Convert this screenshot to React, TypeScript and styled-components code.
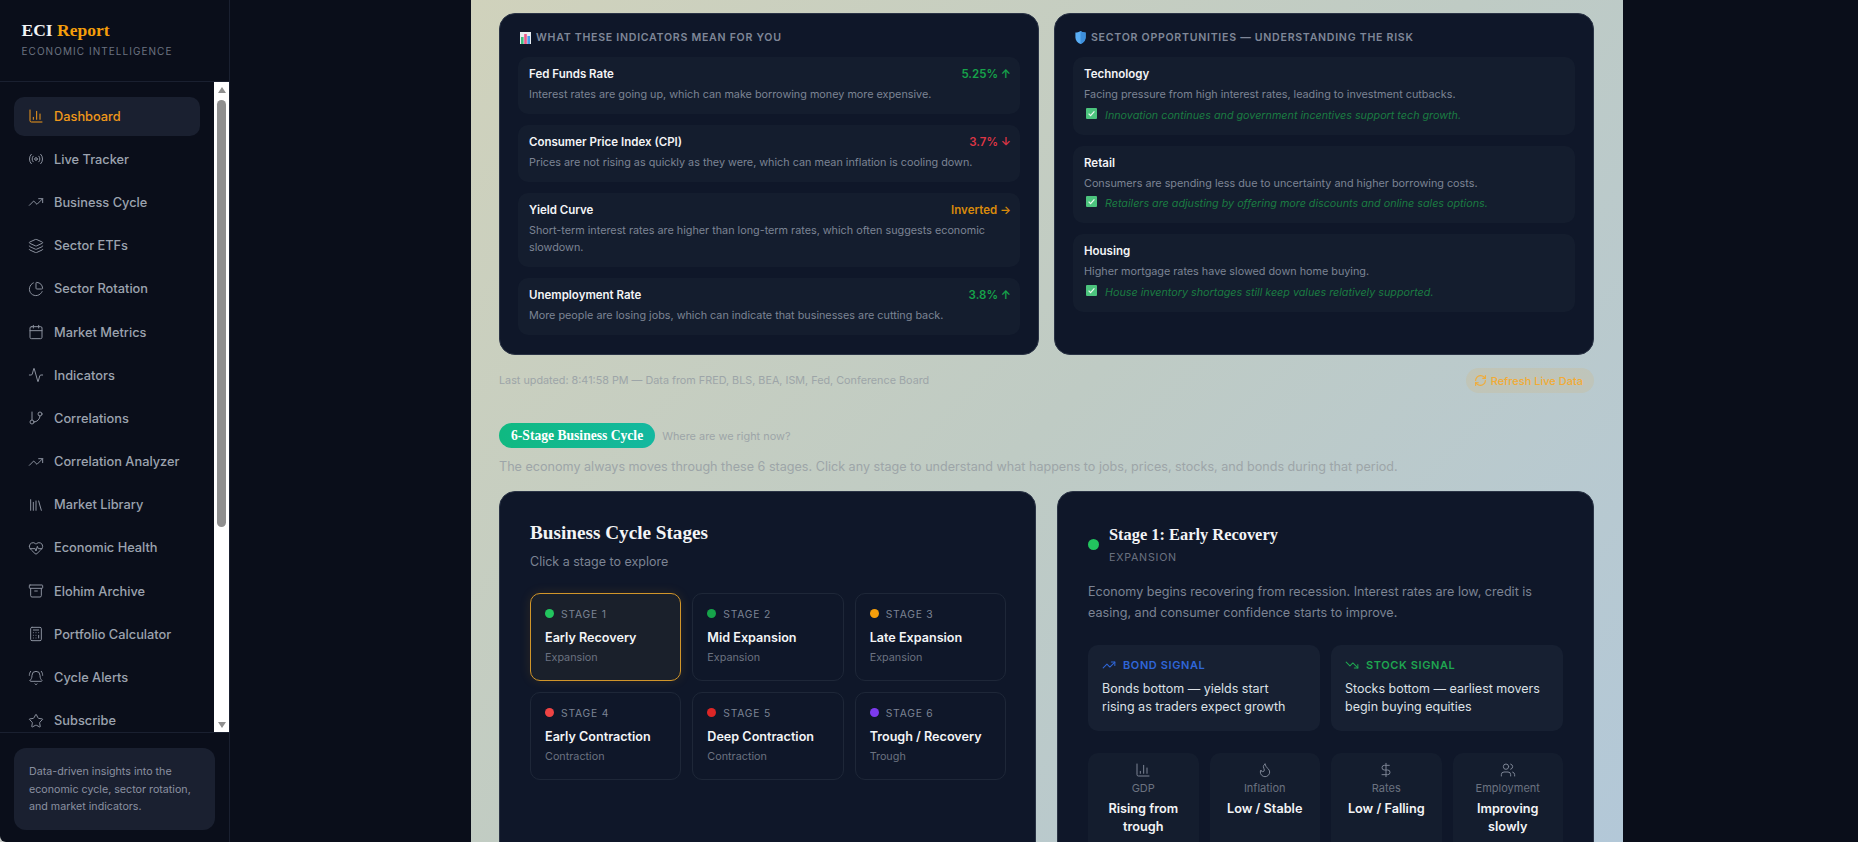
import React from 'react';
import styled, { createGlobalStyle } from 'styled-components';
import {
    Activity,
    Archive,
    BarChart3,
    BellRing,
    Calculator,
    Calendar,
    DollarSign,
    Flame,
    GitBranch,
    HeartPulse,
    Layers,
    Library,
    PieChart,
    Radio,
    RefreshCw,
    Star,
    TrendingDown,
    TrendingUp,
    Users,
} from 'lucide-react';

const SANS = `Inter, "Liberation Sans", sans-serif`;
const SERIF = `"Liberation Serif", "DejaVu Serif", serif`;

const GlobalStyle = createGlobalStyle`
    html, body {
        margin: 0;
        height: 100%;
        overflow: hidden;
        background: #c9ccc9;
    }
    * {
        box-sizing: border-box;
    }
`;

const Shell = styled.div`
    display: flex;
    height: 842px;
    overflow: hidden;
    background: #0a0e1a;
    border-bottom-left-radius: 6px;
    font-family: ${SANS};
`;

// サイドバー
const Sidebar = styled.aside`
    display: flex;
    flex-direction: column;
    flex: none;
    width: 230px;
    height: 100%;
    border-right: 1px solid #1a2030;
`;

const Brand = styled.div`
    flex: none;
    height: 82px;
    padding: 18px 21.5px 0;
    border-bottom: 1px solid #1a2030;
`;

const Logo = styled.div`
    font-family: ${SERIF};
    font-size: 17.5px;
    font-weight: 700;
    line-height: 24px;
    color: #f3f4f6;

    span {
        color: #f59e0b;
    }
`;

const Tagline = styled.div`
    margin-top: 2px;
    font-size: 10px;
    line-height: 14px;
    letter-spacing: 1.05px;
    color: #6b7280;
`;

const NavArea = styled.div`
    display: flex;
    flex: 1;
    min-height: 0;
`;

const NavList = styled.nav`
    display: flex;
    flex-direction: column;
    flex: 1;
    gap: 4px;
    min-width: 0;
    padding: 14.5px 14px 0;
    overflow: hidden;
`;

const NavItem = styled.div<{ $active?: boolean }>`
    display: flex;
    align-items: center;
    flex: none;
    gap: 10px;
    height: 39.2px;
    padding: 0 14px;
    border-radius: 10px;
    font-size: 12.8px;
    font-weight: 500;
    color: ${(p) => (p.$active ? '#f0981a' : '#9ca3af')};
    background: ${(p) => (p.$active ? '#1a2030' : 'transparent')};

    svg {
        flex: none;
        color: ${(p) => (p.$active ? '#f0981a' : '#8b919e')};
    }
`;

const ScrollTrack = styled.div`
    display: flex;
    flex-direction: column;
    align-items: center;
    flex: none;
    width: 15px;
    background: #ffffff;
`;

const ScrollArrow = styled.div<{ $down?: boolean }>`
    flex: none;
    width: 0;
    height: 0;
    margin: ${(p) => (p.$down ? 'auto 0 4px' : '5px 0 0')};
    border-left: 4.5px solid transparent;
    border-right: 4.5px solid transparent;
    border-bottom: ${(p) => (p.$down ? '0' : '6px solid #8f8f8f')};
    border-top: ${(p) => (p.$down ? '6px solid #8f8f8f' : '0')};
`;

const ScrollThumb = styled.div`
    flex: none;
    width: 9px;
    height: 427px;
    margin-top: 7px;
    border-radius: 5px;
    background: #8f8f8f;
`;

const SidebarFoot = styled.div`
    flex: none;
    height: 110px;
    padding: 15px 14px 0;
    border-top: 1px solid #1a2030;
`;

const FootNote = styled.div`
    width: 201px;
    height: 82px;
    padding: 15px;
    border-radius: 12px;
    background: #1a2030;
    font-size: 10.7px;
    line-height: 17.5px;
    color: #8a90a0;
`;

// メインカラム
const Column = styled.main`
    flex: none;
    width: 1152px;
    height: 100%;
    margin-left: 241px;
    padding: 13px 29px 0 28px;
    overflow: hidden;
    background: linear-gradient(135deg, #d0d2bc 0%, #bfcbc4 50%, #b3c8d8 100%);
`;

const CardRow = styled.div`
    display: grid;
    grid-template-columns: 540px 540px;
    gap: 15px;
`;

const Card = styled.section`
    height: 342px;
    padding: 16.5px 18px;
    border: 1px solid #2a3345;
    border-radius: 16px;
    background: #0f1729;
`;

const CardTitle = styled.h3`
    display: flex;
    align-items: center;
    gap: 5px;
    height: 14px;
    margin: 0 0 12.5px 2px;
    font-size: 10.6px;
    font-weight: 600;
    letter-spacing: 0.72px;
    text-transform: uppercase;
    color: #7f8798;
`;

const RowList = styled.div`
    display: flex;
    flex-direction: column;
    gap: 11px;
`;

const InfoRow = styled.div`
    padding: 10px 9px 11.1px 11px;
    border-radius: 10px;
    background: #141d2e;
`;

const InfoHead = styled.div`
    display: flex;
    align-items: center;
    justify-content: space-between;
    height: 14px;
`;

const InfoName = styled.div`
    font-size: 11.5px;
    font-weight: 600;
    line-height: 14px;
    color: #f3f4f6;
`;

const InfoValue = styled.div<{ $color: string }>`
    font-size: 11.5px;
    font-weight: 600;
    color: ${(p) => p.$color};
`;

const InfoText = styled.p`
    margin: 5px 0 0;
    font-size: 10.8px;
    line-height: 17px;
    color: #7c8494;
`;

const InfoNote = styled.div`
    display: flex;
    align-items: center;
    gap: 8px;
    margin-top: 3.5px;
    margin-left: 2px;
    font-size: 10.75px;
    font-style: italic;
    line-height: 17px;
    color: #1b7c42;
`;

const StatusBar = styled.div`
    display: flex;
    align-items: center;
    justify-content: space-between;
    height: 25px;
    margin-top: 13px;
`;

const StatusText = styled.span`
    font-size: 10.8px;
    color: #9da5a8;
`;

const RefreshPill = styled.div`
    display: flex;
    align-items: center;
    gap: 4px;
    height: 25px;
    padding: 0 11px 0 8px;
    border-radius: 12.5px;
    background: rgba(245, 158, 11, 0.1);
    font-size: 11px;
    font-weight: 500;
    color: #f2ab35;
`;

const SectionHead = styled.div`
    display: flex;
    align-items: center;
    gap: 7px;
    margin-top: 30px;
`;

const SectionBadge = styled.div`
    height: 25px;
    padding: 0 12px;
    border-radius: 12.5px;
    background: linear-gradient(90deg, #10b981, #14b8a0);
    font-family: ${SERIF};
    font-size: 13.6px;
    font-weight: 700;
    line-height: 25px;
    color: #ffffff;
`;

const SectionHint = styled.span`
    font-size: 10.9px;
    color: #9da5a8;
`;

const SectionText = styled.p`
    margin: 9px 0 0;
    font-size: 12.6px;
    line-height: 20px;
    color: #9da5a8;
`;

const StageLayout = styled.div`
    display: grid;
    grid-template-columns: 537px 537px;
    gap: 21px;
    margin-top: 14px;
`;

const StagePanel = styled.section`
    height: 500px;
    padding: 30px;
    border: 1px solid #2a3345;
    border-radius: 16px;
    background: #0f1729;
`;

const PanelTitle = styled.h2`
    margin: -2px 0 0;
    font-family: ${SERIF};
    font-size: 19.2px;
    font-weight: 700;
    line-height: 26px;
    color: #f3f4f6;
`;

const PanelSub = styled.p`
    margin: 6px 0 0;
    font-size: 12.5px;
    line-height: 20px;
    color: #7c8494;
`;

const StageGrid = styled.div`
    display: grid;
    grid-template-columns: repeat(3, 1fr);
    gap: 11px;
    width: 476px;
    margin-top: 20.5px;
`;

const StageCard = styled.div<{ $active?: boolean }>`
    height: 88px;
    padding: 13px 14px;
    border: 1px solid ${(p) => (p.$active ? '#d1962a' : '#1e2738')};
    border-radius: 10px;
    background: ${(p) => (p.$active ? '#1a202b' : 'transparent')};
    box-shadow: ${(p) => (p.$active ? '0 0 12px rgba(245, 158, 11, 0.12)' : 'none')};
`;

const StageLabel = styled.div`
    display: flex;
    align-items: center;
    gap: 7px;
    height: 14px;
    font-size: 10.3px;
    letter-spacing: 0.8px;
    color: #7c8494;
`;

const Dot = styled.span<{ $color: string; $size?: number }>`
    flex: none;
    width: ${(p) => p.$size ?? 9}px;
    height: ${(p) => p.$size ?? 9}px;
    border-radius: 50%;
    background: ${(p) => p.$color};
`;

const StageName = styled.div`
    margin-top: 7.5px;
    font-size: 12.6px;
    font-weight: 600;
    line-height: 20px;
    color: #f3f4f6;
`;

const StageType = styled.div`
    margin-top: 3px;
    font-size: 10.8px;
    line-height: 14px;
    color: #6b7280;
`;

const DetailHead = styled.div`
    display: flex;
    align-items: center;
    gap: 10px;
`;

const DetailTitle = styled.h2`
    margin: 0;
    font-family: ${SERIF};
    font-size: 16.4px;
    font-weight: 700;
    line-height: 26px;
    color: #f3f4f6;
`;

const DetailPhase = styled.div`
    margin-top: 2px;
    font-size: 10.7px;
    letter-spacing: 0.75px;
    line-height: 16px;
    color: #6b7280;
`;

const DetailText = styled.p`
    margin: 15px 0 0;
    font-size: 12.6px;
    line-height: 21.2px;
    color: #7c8494;
`;

const SignalGrid = styled.div`
    display: grid;
    grid-template-columns: 1fr 1fr;
    gap: 11px;
    margin-top: 22px;
`;

const SignalBox = styled.div`
    height: 86px;
    padding: 13px 14px;
    border-radius: 10px;
    background: #172032;
`;

const SignalHead = styled.div<{ $color: string }>`
    display: flex;
    align-items: center;
    gap: 7px;
    height: 14px;
    font-size: 11px;
    font-weight: 600;
    letter-spacing: 0.6px;
    color: ${(p) => p.$color};
`;

const SignalText = styled.div`
    margin-top: 8px;
    font-size: 12.5px;
    line-height: 18px;
    color: #dde1e6;
`;

const MetricGrid = styled.div`
    display: grid;
    grid-template-columns: repeat(4, 1fr);
    gap: 11px;
    margin-top: 22px;
`;

const MetricBox = styled.div`
    height: 110px;
    padding: 9px 8px;
    border-radius: 10px;
    background: #141d2e;
    text-align: center;

    svg {
        display: block;
        margin: 0 auto;
        color: #7c8494;
    }
`;

const MetricLabel = styled.div`
    margin-top: 2px;
    font-size: 11px;
    line-height: 16px;
    color: #6b7280;
`;

const MetricValue = styled.div`
    margin-top: 4px;
    font-size: 12.7px;
    font-weight: 600;
    line-height: 18px;
    color: #f3f4f6;
`;

const ChartEmoji = () => (
    <svg width="11" height="12" viewBox="0 0 11 12">
        <rect width="11" height="12" fill="#e8eef2" />
        <rect x="1" y="5" width="2.6" height="7" fill="#3fbf7f" />
        <rect x="4.2" y="2" width="2.6" height="10" fill="#ef5a8a" />
        <rect x="7.4" y="4" width="2.6" height="8" fill="#4a9be8" />
    </svg>
);

const ShieldEmoji = () => (
    <svg width="11" height="13" viewBox="0 0 11 13">
        <path d="M5.5 0C3.8 1 2 1.5 0.4 1.6V6.5C0.4 9.5 2.6 11.8 5.5 13C8.4 11.8 10.6 9.5 10.6 6.5V1.6C9 1.5 7.2 1 5.5 0Z" fill="#5aaef5" />
        <path d="M5.5 0V13C8.4 11.8 10.6 9.5 10.6 6.5V1.6C9 1.5 7.2 1 5.5 0Z" fill="#3d8fdc" />
    </svg>
);

const CheckEmoji = () => (
    <svg width="11" height="11" viewBox="0 0 11 11" style={{ marginTop: -4, flex: 'none' }}>
        <rect width="11" height="11" rx="1" fill="#4cc47e" />
        <path d="M2.6 5.6L4.6 7.6L8.4 3.4" fill="none" stroke="#e8f8ee" strokeWidth="1.3" />
    </svg>
);

const NAV_ITEMS = [
    { label: 'Dashboard', icon: BarChart3, active: true },
    { label: 'Live Tracker', icon: Radio },
    { label: 'Business Cycle', icon: TrendingUp },
    { label: 'Sector ETFs', icon: Layers },
    { label: 'Sector Rotation', icon: PieChart },
    { label: 'Market Metrics', icon: Calendar },
    { label: 'Indicators', icon: Activity },
    { label: 'Correlations', icon: GitBranch },
    { label: 'Correlation Analyzer', icon: TrendingUp },
    { label: 'Market Library', icon: Library },
    { label: 'Economic Health', icon: HeartPulse },
    { label: 'Elohim Archive', icon: Archive },
    { label: 'Portfolio Calculator', icon: Calculator },
    { label: 'Cycle Alerts', icon: BellRing },
    { label: 'Subscribe', icon: Star },
];

const INDICATORS = [
    {
        name: 'Fed Funds Rate',
        value: '5.25% ↑',
        color: '#16a34a',
        text: 'Interest rates are going up, which can make borrowing money more expensive.',
    },
    {
        name: 'Consumer Price Index (CPI)',
        value: '3.7% ↓',
        color: '#dc3545',
        text: 'Prices are not rising as quickly as they were, which can mean inflation is cooling down.',
    },
    {
        name: 'Yield Curve',
        value: 'Inverted →',
        color: '#d98a0b',
        text: 'Short-term interest rates are higher than long-term rates, which often suggests economic slowdown.',
    },
    {
        name: 'Unemployment Rate',
        value: '3.8% ↑',
        color: '#16a34a',
        text: 'More people are losing jobs, which can indicate that businesses are cutting back.',
    },
];

const SECTORS = [
    {
        name: 'Technology',
        text: 'Facing pressure from high interest rates, leading to investment cutbacks.',
        note: 'Innovation continues and government incentives support tech growth.',
    },
    {
        name: 'Retail',
        text: 'Consumers are spending less due to uncertainty and higher borrowing costs.',
        note: 'Retailers are adjusting by offering more discounts and online sales options.',
    },
    {
        name: 'Housing',
        text: 'Higher mortgage rates have slowed down home buying.',
        note: 'House inventory shortages still keep values relatively supported.',
    },
];

const STAGES = [
    { label: 'STAGE 1', name: 'Early Recovery', type: 'Expansion', color: '#22c55e', active: true },
    { label: 'STAGE 2', name: 'Mid Expansion', type: 'Expansion', color: '#16a34a' },
    { label: 'STAGE 3', name: 'Late Expansion', type: 'Expansion', color: '#f59e0b' },
    { label: 'STAGE 4', name: 'Early Contraction', type: 'Contraction', color: '#ef4444' },
    { label: 'STAGE 5', name: 'Deep Contraction', type: 'Contraction', color: '#dc2626' },
    { label: 'STAGE 6', name: 'Trough / Recovery', type: 'Trough', color: '#7c3aed' },
];

const METRICS = [
    { label: 'GDP', value: 'Rising from trough', icon: BarChart3 },
    { label: 'Inflation', value: 'Low / Stable', icon: Flame },
    { label: 'Rates', value: 'Low / Falling', icon: DollarSign },
    { label: 'Employment', value: 'Improving slowly', icon: Users },
];

const App: React.FC = () => {
    return (
        <>
            <GlobalStyle />
            <Shell>
                <Sidebar>
                    <Brand>
                        <Logo>
                            ECI <span>Report</span>
                        </Logo>
                        <Tagline>ECONOMIC INTELLIGENCE</Tagline>
                    </Brand>
                    <NavArea>
                        <NavList>
                            {NAV_ITEMS.map((item) => (
                                <NavItem key={item.label} $active={item.active}>
                                    <item.icon size={16} strokeWidth={1.5} />
                                    {item.label}
                                </NavItem>
                            ))}
                        </NavList>
                        <ScrollTrack>
                            <ScrollArrow />
                            <ScrollThumb />
                            <ScrollArrow $down />
                        </ScrollTrack>
                    </NavArea>
                    <SidebarFoot>
                        <FootNote>
                            Data-driven insights into the economic cycle, sector rotation, and market indicators.
                        </FootNote>
                    </SidebarFoot>
                </Sidebar>
                <Column>
                    <CardRow>
                        <Card>
                            <CardTitle>
                                <ChartEmoji />
                                What these indicators mean for you
                            </CardTitle>
                            <RowList>
                                {INDICATORS.map((row) => (
                                    <InfoRow key={row.name}>
                                        <InfoHead>
                                            <InfoName>{row.name}</InfoName>
                                            <InfoValue $color={row.color}>{row.value}</InfoValue>
                                        </InfoHead>
                                        <InfoText>{row.text}</InfoText>
                                    </InfoRow>
                                ))}
                            </RowList>
                        </Card>
                        <Card>
                            <CardTitle>
                                <ShieldEmoji />
                                Sector opportunities — understanding the risk
                            </CardTitle>
                            <RowList>
                                {SECTORS.map((row) => (
                                    <InfoRow key={row.name}>
                                        <InfoName>{row.name}</InfoName>
                                        <InfoText>{row.text}</InfoText>
                                        <InfoNote>
                                            <CheckEmoji />
                                            {row.note}
                                        </InfoNote>
                                    </InfoRow>
                                ))}
                            </RowList>
                        </Card>
                    </CardRow>
                    <StatusBar>
                        <StatusText>Last updated: 8:41:58 PM — Data from FRED, BLS, BEA, ISM, Fed, Conference Board</StatusText>
                        <RefreshPill>
                            <RefreshCw size={13} strokeWidth={2} />
                            Refresh Live Data
                        </RefreshPill>
                    </StatusBar>
                    <SectionHead>
                        <SectionBadge>6-Stage Business Cycle</SectionBadge>
                        <SectionHint>Where are we right now?</SectionHint>
                    </SectionHead>
                    <SectionText>
                        The economy always moves through these 6 stages. Click any stage to understand what happens to jobs, prices, stocks, and bonds during that period.
                    </SectionText>
                    <StageLayout>
                        <StagePanel>
                            <PanelTitle>Business Cycle Stages</PanelTitle>
                            <PanelSub>Click a stage to explore</PanelSub>
                            <StageGrid>
                                {STAGES.map((stage) => (
                                    <StageCard key={stage.label} $active={stage.active}>
                                        <StageLabel>
                                            <Dot $color={stage.color} />
                                            {stage.label}
                                        </StageLabel>
                                        <StageName>{stage.name}</StageName>
                                        <StageType>{stage.type}</StageType>
                                    </StageCard>
                                ))}
                            </StageGrid>
                        </StagePanel>
                        <StagePanel>
                            <DetailHead>
                                <Dot $color="#22c55e" $size={11} />
                                <div>
                                    <DetailTitle>Stage 1: Early Recovery</DetailTitle>
                                    <DetailPhase>EXPANSION</DetailPhase>
                                </div>
                            </DetailHead>
                            <DetailText>
                                Economy begins recovering from recession. Interest rates are low, credit is easing, and consumer confidence starts to improve.
                            </DetailText>
                            <SignalGrid>
                                <SignalBox>
                                    <SignalHead $color="#2f66d8">
                                        <TrendingUp size={14} strokeWidth={1.75} />
                                        BOND SIGNAL
                                    </SignalHead>
                                    <SignalText>
                                        Bonds bottom — yields start
                                        <br />
                                        rising as traders expect growth
                                    </SignalText>
                                </SignalBox>
                                <SignalBox>
                                    <SignalHead $color="#1fa650">
                                        <TrendingDown size={14} strokeWidth={1.75} />
                                        STOCK SIGNAL
                                    </SignalHead>
                                    <SignalText>Stocks bottom — earliest movers begin buying equities</SignalText>
                                </SignalBox>
                            </SignalGrid>
                            <MetricGrid>
                                {METRICS.map((metric) => (
                                    <MetricBox key={metric.label}>
                                        <metric.icon size={16} strokeWidth={1.5} />
                                        <MetricLabel>{metric.label}</MetricLabel>
                                        <MetricValue>{metric.value}</MetricValue>
                                    </MetricBox>
                                ))}
                            </MetricGrid>
                        </StagePanel>
                    </StageLayout>
                </Column>
            </Shell>
        </>
    );
};

export default App;
